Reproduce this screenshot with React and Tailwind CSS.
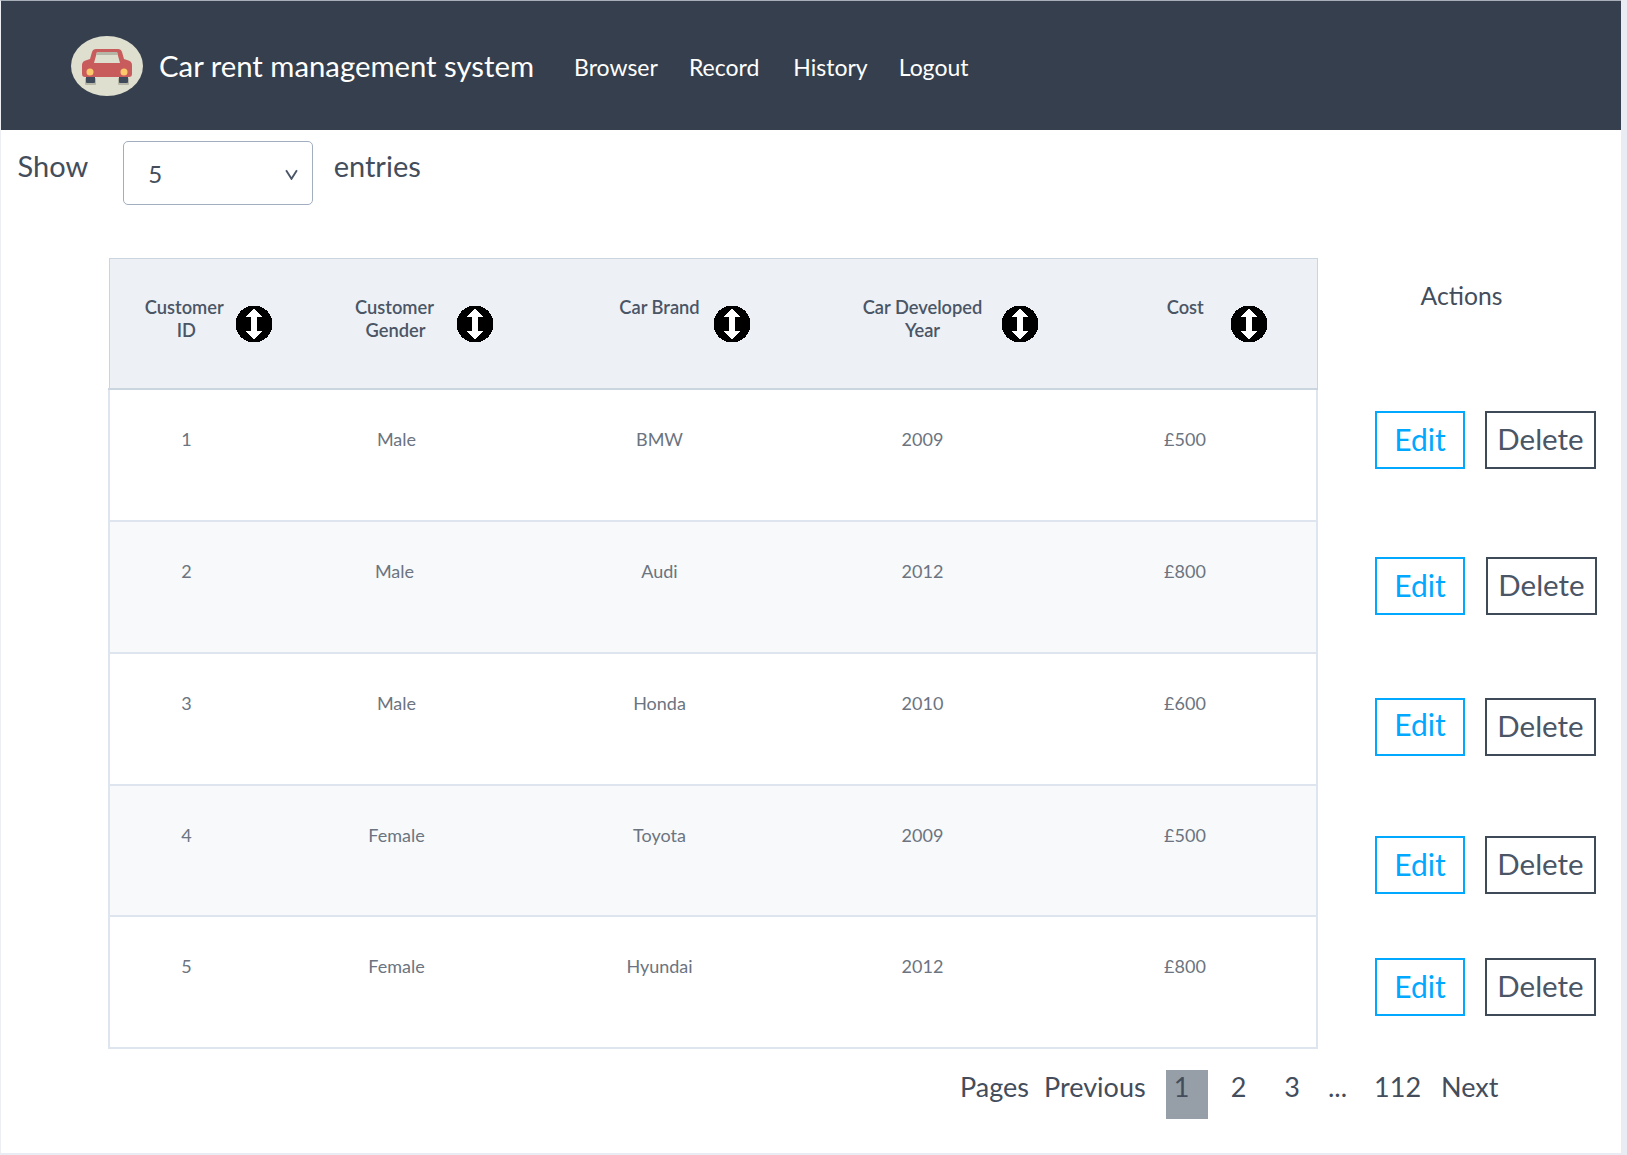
import React from "react";

const CELLS = [
  ["1", "Male", "BMW", "2009", "£500"],
  ["2", "Male", "Audi", "2012", "£800"],
  ["3", "Male", "Honda", "2010", "£600"],
  ["4", "Female", "Toyota", "2009", "£500"],
  ["5", "Female", "Hyundai", "2012", "£800"],
];

const HEADS = [
  { lines: ["Customer", "ID"], icon: "left-[125px]", first: "pr-[4px]" },
  { lines: ["Customer", "Gender"], icon: "left-[193px]", first: "pr-[2px]" },
  { lines: ["Car Brand"], icon: "left-[185px]", first: "" },
  { lines: ["Car Developed", "Year"], icon: "left-[210px]", first: "" },
  { lines: ["Cost"], icon: "left-[176px]", first: "" },
];

const ACTION_ROWS = [
  { mt: "mt-[98px]", del: "ml-[20px]", edit: "pb-[3px]" },
  { mt: "mt-[88px]", del: "ml-[21px]", edit: "pb-[3px]" },
  { mt: "mt-[83px]", del: "ml-[20px]", edit: "pb-[7px]" },
  { mt: "mt-[80px]", del: "ml-[20px]", edit: "pb-[3px]" },
  { mt: "mt-[64px]", del: "ml-[20px]", edit: "pb-[3px]" },
];

function SortIcon({ className }) {
  return (
    <svg viewBox="0 0 38 38" className={className} shapeRendering="crispEdges">
      <circle cx="19" cy="19" r="18.5" fill="#000" />
      <path d="M19 3 L27 12 L22 12 L22 26 L27 26 L19 35 L11 26 L16 26 L16 12 L11 12 Z" fill="#fff" />
    </svg>
  );
}

function CarLogo() {
  return (
    <svg viewBox="0 0 72 60" className="h-[60px] w-[72px] shrink-0">
      <ellipse cx="36" cy="30" rx="36" ry="30" fill="#dfdfcf" />
      <rect x="14" y="42" width="11" height="7" rx="1" fill="#b5b5a8" />
      <rect x="47" y="42" width="11" height="7" rx="1" fill="#b5b5a8" />
      <rect x="15" y="40" width="9" height="7" rx="1" fill="#3f4a5a" />
      <rect x="48" y="40" width="9" height="7" rx="1" fill="#3f4a5a" />
      <path d="M19 23 L21 16 Q22 13 25 13 L47 13 Q50 13 51 16 L53 23 L56 24 Q61 25 61 29 L61 38 Q61 41 58 41 L14 41 Q11 41 11 38 L11 29 Q11 25 16 24 Z" fill="#c85c5c" />
      <path d="M23 27 L26 16 L46 16 L49 27 Z" fill="#dfdfcf" />
      <path d="M26 16 L46 16 L47 19 L25 19 Z" fill="#b5b5a8" />
      <circle cx="19" cy="36" r="3.5" fill="#fbc96b" />
      <circle cx="53" cy="36" r="3.5" fill="#fbc96b" />
    </svg>
  );
}

export default function App() {
  return (
    <div className="h-[1155px] w-[1627px] overflow-hidden bg-[#e9ecf3] pb-[2px] pr-[6px] font-['Lato',sans-serif] text-[#434d5b]">
      <div className="h-full border-l border-t border-[#eceef3] border-t-[#a9afb8] bg-white">
        <header className="flex h-[129px] items-center bg-[#363f4d] pl-[70px] text-white">
          <CarLogo />
          <span className="ml-[16px] text-[29.3px] leading-none">Car rent management system</span>
          <nav className="ml-[40px] mt-[3px] flex text-[23px] leading-none">
            <span>Browser</span>
            <span className="ml-[31px]">Record</span>
            <span className="ml-[34px]">History</span>
            <span className="ml-[31px]">Logout</span>
          </nav>
        </header>

        <div className="flex h-[128px] items-start pl-[16.5px] text-[29px] leading-none">
          <span className="mt-[21px]">Show</span>
          <div className="ml-[35px] mt-[11px] flex h-[64px] w-[189.5px] items-center justify-between rounded-[5px] border border-[#a0aec0] pl-[24px] pr-[14px] text-[24px]">
            <span className="mt-[1px]">5</span>
            <svg viewBox="0 0 12 10" className="mt-[2px] h-[11px] w-[13px]"><path d="M1 1 L6 9 L11 1" fill="none" stroke="#4a5568" strokeWidth="1.7" /></svg>
          </div>
          <span className="ml-[21px] mt-[21px]">entries</span>
        </div>

        <div className="flex items-start pl-[107px]">
          <table className="w-[1208px] table-fixed border-collapse">
            <colgroup>
              <col className="w-[154px]" />
              <col className="w-[265px]" />
              <col className="w-[263px]" />
              <col className="w-[263px]" />
              <col className="w-[263px]" />
            </colgroup>
            <thead>
              <tr className="h-[130px] border border-b-2 border-[#cbd5e0] bg-[#edf0f5]">
                {HEADS.map((h) => (
                  <th key={h.lines[0] + h.lines[1]} className="relative p-0 pt-[37px] align-top text-[18.3px] font-semibold leading-[23px] text-[#4a5565]">
                    {h.lines.map((l, k) => <div key={l} className={k === 0 ? h.first : ""}>{l}</div>)}
                    <SortIcon className={"absolute top-[46px] h-[38px] w-[38px] " + h.icon} />
                  </th>
                ))}
              </tr>
            </thead>
            <tbody>
              {CELLS.map((row, i) => (
                <tr key={row[0]} className={(i === 0 ? "h-[132.7px] " : "h-[131.7px] ") + "border-x-2 border-b-2 border-[#dfe5ee] " + (i % 2 ? "bg-[#f7f9fb]" : "bg-white")}>
                  {row.map((c, j) => (
                    <td key={j} className="p-0 pt-[38px] align-top">
                      <div className={"text-center text-[18px] leading-[23px] text-[#6b7480] " + (j === 1 ? (i === 1 ? "pr-[2px]" : "pl-[2px]") : "")}>{c}</div>
                    </td>
                  ))}
                </tr>
              ))}
            </tbody>
          </table>

          <div className="ml-[57px] flex flex-col">
            <div className="mt-[21px] h-[34px] w-[173px] text-center text-[24.7px] leading-[34px]">Actions</div>
            {ACTION_ROWS.map((r, i) => (
              <div key={i} className={"flex " + r.mt}>
                <div className={"flex h-[58px] w-[90px] items-center justify-center border-2 border-[#00a8ff] text-[30px] leading-none text-[#00a8ff] " + r.edit}>Edit</div>
                <div className={"flex h-[58px] w-[111px] items-center justify-center border-2 border-[#3f4a59] pb-[3px] text-[29.5px] leading-none text-[#4a5565] " + r.del}>Delete</div>
              </div>
            ))}
          </div>
        </div>

        <div className="mt-[21px] flex h-[49px] items-start pl-[959px] text-[27px] leading-none">
          <span className="mt-[3px]">Pages</span>
          <span className="ml-[15px] mt-[3px]">Previous</span>
          <span className="ml-[20px] h-[49px] w-[42px] bg-[#969ea8] pl-[8px] pt-[3px]">1</span>
          <span className="ml-[23px] mt-[3px]">2</span>
          <span className="ml-[38px] mt-[3px]">3</span>
          <span className="ml-[28px] mt-[3px]">...</span>
          <span className="ml-[27px] mt-[3px]">112</span>
          <span className="ml-[20px] mt-[3px]">Next</span>
        </div>
      </div>
    </div>
  );
}
